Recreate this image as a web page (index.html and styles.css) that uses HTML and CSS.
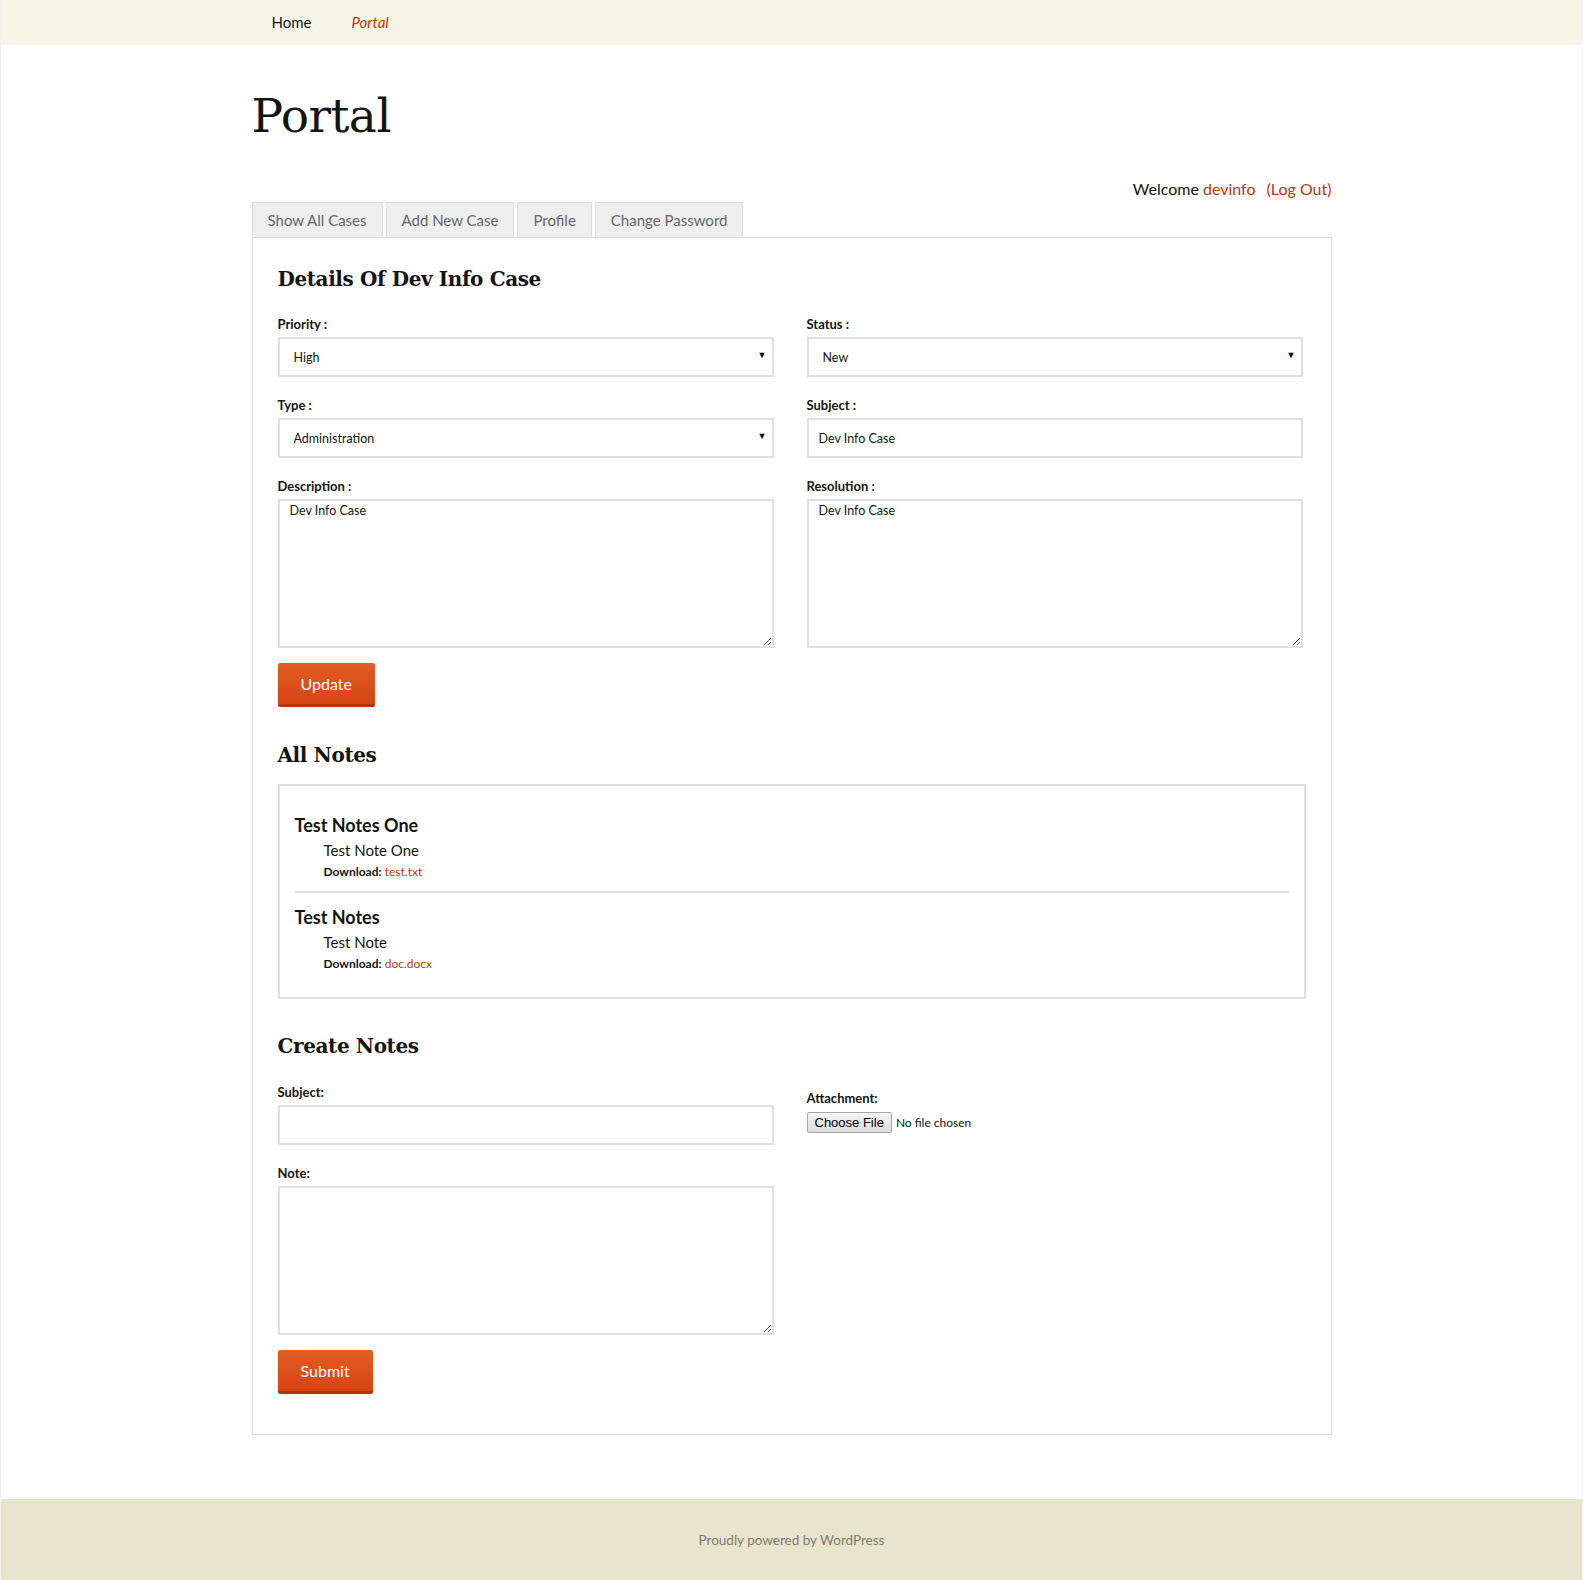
FILE: index.html
```html
<!DOCTYPE html>
<html lang="en">
<head>
<meta charset="utf-8">
<title>Portal</title>
<link rel="stylesheet" href="styles.css">
</head>
<body>
<div class="site">
  <header class="navbar">
    <nav class="nav-inner">
      <a class="nav-link" href="#">Home</a>
      <a class="nav-link current" href="#">Portal</a>
    </nav>
  </header>

  <main class="content">
    <h1 class="entry-title">Portal</h1>

    <div class="welcome">Welcome <a href="#">devinfo</a><a class="logout" href="#">(Log Out)</a></div>

    <div class="tabs">
      <a class="tab" href="#">Show All Cases</a>
      <a class="tab" href="#">Add New Case</a>
      <a class="tab" href="#">Profile</a>
      <a class="tab" href="#">Change Password</a>
    </div>

    <section class="panel">
      <h2 class="section-title">Details Of Dev Info Case</h2>

      <div class="form-grid">
        <div class="field">
          <label class="label">Priority :</label>
          <div class="select-wrap">
            <select class="control"><option>High</option></select>
          </div>
        </div>
        <div class="field">
          <label class="label">Status :</label>
          <div class="select-wrap">
            <select class="control"><option>New</option></select>
          </div>
        </div>
        <div class="field">
          <label class="label">Type :</label>
          <div class="select-wrap">
            <select class="control"><option>Administration</option></select>
          </div>
        </div>
        <div class="field">
          <label class="label">Subject :</label>
          <input class="control input" type="text" value="Dev Info Case">
        </div>
        <div class="field">
          <label class="label">Description :</label>
          <textarea class="control area">Dev Info Case</textarea>
        </div>
        <div class="field">
          <label class="label">Resolution :</label>
          <textarea class="control area">Dev Info Case</textarea>
        </div>
      </div>

      <button class="btn" type="button">Update</button>

      <h2 class="section-title notes-title">All Notes</h2>

      <div class="notes">
        <div class="note">
          <h4 class="note-subject">Test Notes One</h4>
          <div class="note-body">
            <p class="note-text">Test Note One</p>
            <p class="note-dl"><strong>Download:</strong> <a href="#">test.txt</a></p>
          </div>
        </div>
        <hr class="note-sep">
        <div class="note">
          <h4 class="note-subject">Test Notes</h4>
          <div class="note-body">
            <p class="note-text">Test Note</p>
            <p class="note-dl"><strong>Download:</strong> <a href="#">doc.docx</a></p>
          </div>
        </div>
      </div>

      <h2 class="section-title create-title">Create Notes</h2>

      <div class="form-grid create-grid">
        <div class="col">
          <div class="field">
            <label class="label">Subject:</label>
            <input class="control input" type="text">
          </div>
          <div class="field">
            <label class="label">Note:</label>
            <textarea class="control area"></textarea>
          </div>
        </div>
        <div class="col attach-col">
          <label class="label">Attachment:</label>
          <input class="file" type="file">
        </div>
      </div>

      <button class="btn" type="button">Submit</button>
    </section>
  </main>

  <footer class="footer">Proudly powered by WordPress</footer>
</div>
</body>
</html>
```

FILE: styles.css
```css
html, body {
  margin: 0;
  padding: 0;
  background: #fff;
}

body {
  font-family: Lato, "Open Sans", sans-serif;
  font-size: 16px;
  color: #141412;
}

a {
  color: #bc360a;
  text-decoration: none;
}

.site {
  border-left: 1px solid #f2f2f2;
  border-right: 1px solid #f2f2f2;
  min-height: 1580px;
  display: flex;
  flex-direction: column;
  box-sizing: border-box;
}

.navbar {
  background: #f7f5e7;
  height: 45px;
}

.nav-inner {
  max-width: 1080px;
  margin: 0 auto;
  display: flex;
}

.nav-link {
  color: #141412;
  font-size: 15px;
  line-height: 45px;
  padding: 0 20px;
}

.nav-link.current {
  color: #bc360a;
  font-style: italic;
}

.content {
  width: 1080px;
  margin: 0 auto;
  flex: 1;
}

.entry-title {
  font-family: "DejaVu Serif", serif;
  font-weight: normal;
  font-size: 47px;
  line-height: 52px;
  margin: 45px 0 0;
  letter-spacing: -0.5px;
}

.welcome {
  text-align: right;
  line-height: 24px;
  margin: 35px 0 1px;
  font-size: 16px;
}

.logout {
  margin-left: 11px;
}

.tabs {
  display: flex;
  gap: 3px;
}

.tab {
  display: block;
  height: 35px;
  line-height: 35px;
  padding: 0 15px;
  background: #eee;
  border: 1px solid #ddd;
  border-bottom: none;
  color: #666;
  font-size: 15px;
  box-sizing: border-box;
}

.panel {
  border: 1px solid #ddd;
  padding: 27px 25px 40px;
}

.section-title {
  font-family: "DejaVu Serif", serif;
  font-weight: bold;
  font-size: 20px;
  line-height: 28px;
  margin: 0 0 22px;
  letter-spacing: -0.4px;
}

.form-grid {
  display: grid;
  grid-template-columns: 496px 496px;
  column-gap: 33px;
  row-gap: 19px;
}

.field {
  display: flex;
  flex-direction: column;
}

.label {
  font-size: 13px;
  font-weight: bold;
  line-height: 18px;
  margin-bottom: 4px;
}

.control {
  box-sizing: border-box;
  width: 100%;
  border: 2px solid #e0e0e0;
  background: #fff;
  font-family: Lato, sans-serif;
  font-size: 12.5px;
  color: #141412;
  outline: none;
}

.select-wrap {
  position: relative;
}

.select-wrap::after {
  content: "▼";
  position: absolute;
  right: 7px;
  top: 12px;
  font-size: 9px;
  color: #000;
  pointer-events: none;
}

select.control {
  appearance: none;
  -webkit-appearance: none;
  height: 40px;
  padding: 0 14px;
  border-radius: 0;
}

.input {
  height: 40px;
  padding: 0 10px;
}

.area {
  height: 149px;
  padding: 2px 10px;
  resize: both;
  display: block;
}

.btn {
  display: block;
  margin-top: 15px;
  background: linear-gradient(to bottom, #e05d22 0%, #d74415 100%);
  border: none;
  border-bottom: 3px solid #b93207;
  border-radius: 2px;
  color: #fff;
  font-family: Lato, sans-serif;
  font-size: 16px;
  line-height: 24px;
  padding: 9px 23px 8px;
}

.notes-title {
  margin: 34px 0 15px;
}

.notes {
  width: 1028px;
  box-sizing: border-box;
  border: 2px solid #e0e0e0;
  padding: 27px 15px 24px;
}

.note-subject {
  margin: 0;
  font-size: 18px;
  font-weight: bold;
  line-height: 24px;
}

.note-body {
  padding-left: 29px;
}

.note-text {
  margin: 2px 0 0;
  font-size: 15px;
  line-height: 22px;
}

.note-dl {
  margin: 2px 0 0;
  font-size: 12px;
  line-height: 18px;
}

.note-sep {
  border: none;
  border-top: 2px solid #e0e0e0;
  margin: 10px 0 12px;
}

.create-title {
  margin: 33px 0 23px;
}

.create-grid {
  row-gap: 0;
}

.col {
  display: flex;
  flex-direction: column;
  gap: 19px;
}

.attach-col {
  gap: 1px;
  padding-top: 6px;
}

.file {
  font-family: Lato, sans-serif;
  font-size: 12px;
  color: #141412;
}

.file::file-selector-button {
  font-family: "Liberation Sans", Arial, sans-serif;
  font-size: 13px;
  color: #000;
  height: 21px;
  padding: 0 7px;
  margin-right: 4px;
  border: 1px solid #a6a6a6;
  border-radius: 2px;
  background: linear-gradient(to bottom, #f5f5f5, #dcdcdc);
}

.footer {
  margin-top: 64px;
  background: #e8e5ce;
  height: 82px;
  line-height: 82px;
  text-align: center;
  font-size: 13.5px;
  color: #7d7b6d;
}
```
